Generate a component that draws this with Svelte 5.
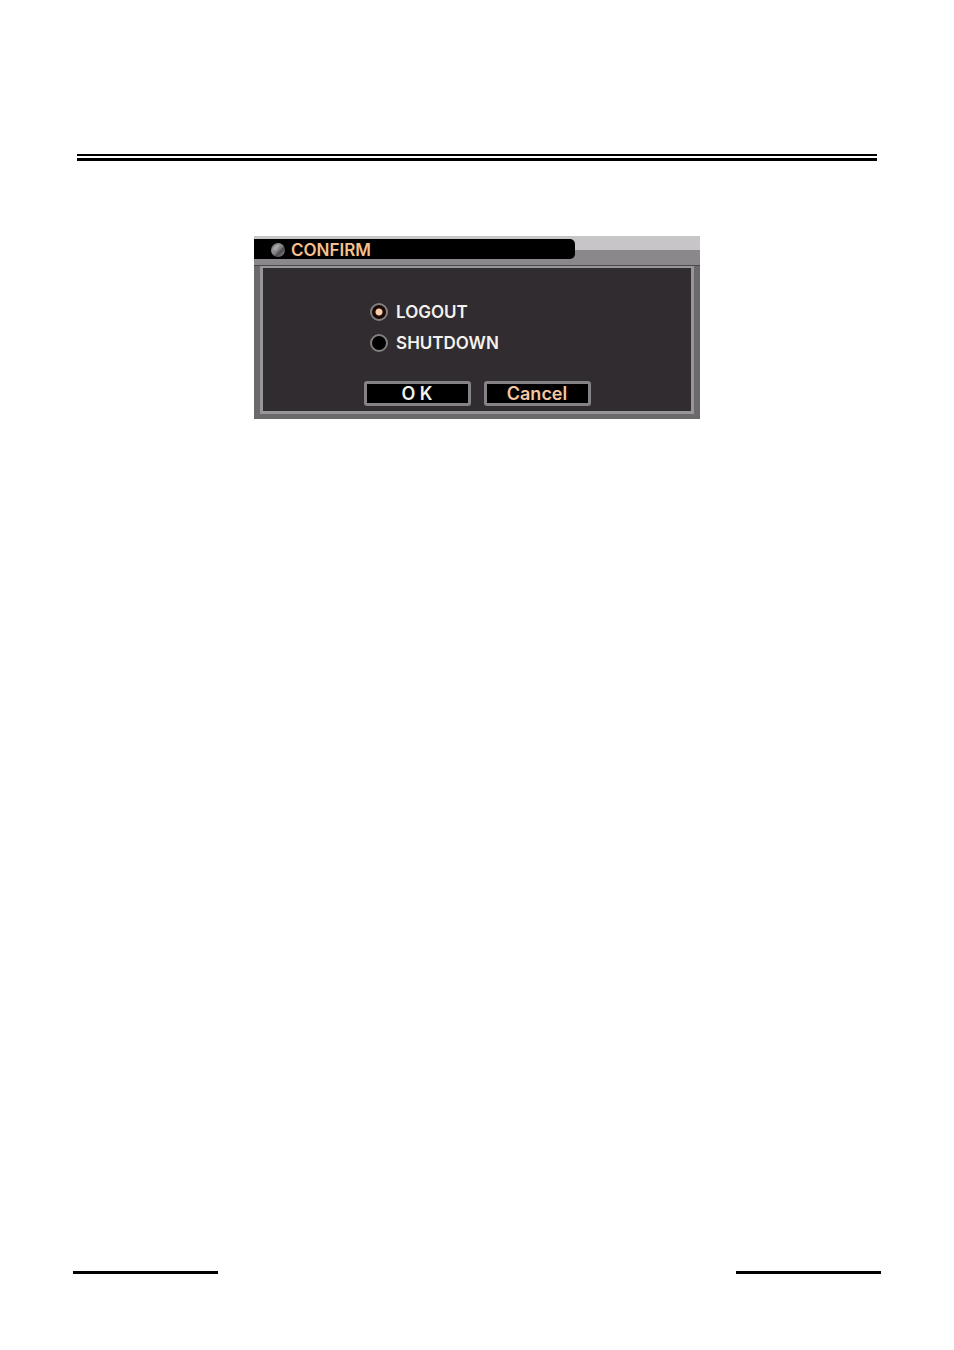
<script lang="ts">
  const actions = ['logout', 'shutdown'];

  let selected = $state('logout');
</script>

<main class="page">
  <div class="rule"></div>

  <form class="dialog" onsubmit={(event) => event.preventDefault()}>
    <header>
      <h1>
        <svg width="16" height="16" viewBox="0 0 16 16" aria-hidden="true">
          <defs>
            <linearGradient id="ball" x1="0" y1="0" x2="1" y2="1">
              <stop offset="0" stop-color="#4c4a4c" />
              <stop offset="0.3" stop-color="#959395" />
              <stop offset="0.5" stop-color="#858385" />
              <stop offset="0.65" stop-color="#4c4a4c" />
              <stop offset="1" stop-color="#969496" />
            </linearGradient>
          </defs>
          <circle cx="8" cy="8" r="7" fill="url(#ball)" />
          <path d="M3 7 Q5 2 10 3 L6 9 Z" fill="#c8c6c8" opacity="0.4" />
        </svg>
        CONFIRM
      </h1>
    </header>

    <div class="frame">
      <div class="panel">
        <div class="options">
          {#each actions as action (action)}
            <label>
              <input type="radio" name="action" value={action} bind:group={selected} />
              {action.toUpperCase()}
            </label>
          {/each}
        </div>
        <div class="buttons">
          <button type="submit">O K</button>
          <button type="button" class="cancel">Cancel</button>
        </div>
      </div>
    </div>
  </form>

  <footer>
    <div class="mark"></div>
    <div class="mark"></div>
  </footer>
</main>

<style>
  :global(body) { background: #fff; }
  .page {
    box-sizing: border-box;
    min-height: 100vh;
    padding: 154px 73px 76px;
    display: flex;
    flex-direction: column;
    font-family: Inter, "Liberation Sans", sans-serif;
  }
  .rule {
    height: 2px;
    margin: 0 4px;
    border-top: 2px solid #000;
    border-bottom: 3px solid #000;
  }
  .dialog {
    width: 100%;
    max-width: 446px;
    margin: 75px auto 0;
    background: #6c696d;
  }
  header {
    padding: 3px 0 6px;
    background: linear-gradient(#c8c5c8 14px, #8b888c 14px);
    border-bottom: 1px solid #4c494d;
  }
  h1 {
    box-sizing: border-box;
    width: 72%;
    height: 20px;
    margin: 0;
    padding: 2px 0 0 16px;
    display: flex;
    align-items: center;
    gap: 5px;
    background: #000;
    border-radius: 0 5px 5px 0;
    color: #f6c08c;
    font-size: 17px;
    font-weight: 600;
    line-height: 20px;
  }
  .frame { padding: 0 6px 5px; }
  .panel {
    padding: 34px 16px 5px;
    background: #302c30;
    border: 3px solid #98969a;
    border-top-width: 2px;
  }
  .options {
    margin-left: 23%;
    display: grid;
    justify-items: start;
    gap: 11px;
  }
  label {
    display: flex;
    align-items: center;
    gap: 8px;
    color: #f4f2ee;
    font-size: 17px;
    font-weight: 600;
    line-height: 20px;
  }
  input {
    appearance: none;
    box-sizing: border-box;
    width: 18px;
    height: 18px;
    margin: 0;
    border: 2px solid #827f80;
    border-radius: 50%;
    background: #000;
  }
  input:checked { background: radial-gradient(circle, #fbcfa6 3px, #1c0804 4px); }
  .buttons {
    margin-top: 28px;
    display: flex;
    justify-content: center;
    gap: 13px;
  }
  button {
    box-sizing: border-box;
    width: 107px;
    height: 25px;
    padding: 0;
    background: #000;
    border: 3px solid #858287;
    border-radius: 3px;
    color: #f4f2ee;
    font-family: inherit;
    font-size: 18px;
    font-weight: 600;
    line-height: 19px;
  }
  .cancel { color: #f6c6a0; }
  footer {
    margin-top: auto;
    display: flex;
    justify-content: space-between;
  }
  .mark {
    width: 18%;
    height: 3px;
    background: #000;
  }
</style>
